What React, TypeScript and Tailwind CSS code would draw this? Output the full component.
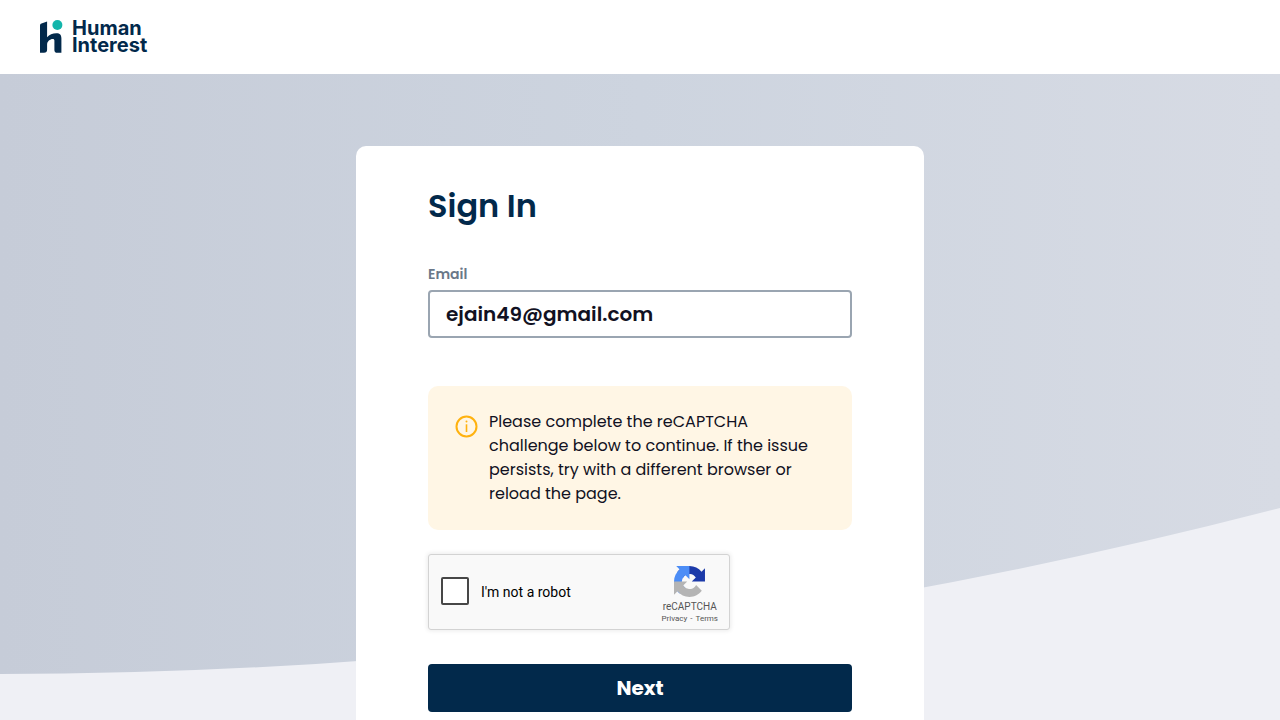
import React from "react";

function BrandLogo() {
  return (
    <a href="#" aria-label="Human Interest" className="flex items-center gap-[9px] text-[#02294b]">
      <svg width="23" height="34" viewBox="0 0 23 34" aria-hidden="true">
        <path
          fill="#02294b"
          d="M0 5.800C0 4.600.4 4 1.500 3.600L7.100 1.400V17.300C9.400 14.600 12.500 13.300 16.400 13.300C20 13.300 21.400 15 21.400 18.500V32.800H17.200C15.300 32.800 14.400 31.900 14.400 30V20.600C14.400 19.500 13.900 19 12.800 19C10 19 7.100 21.300 7.100 24.600V29.600C7.100 31.800 6.100 32.800 4 32.800H0Z"
        />
        <circle cx="17.400" cy="5" r="5" fill="#13b5ab" />
      </svg>
      <span className="block font-[Inter,sans-serif] text-[20px] font-bold leading-[17px]">
        <span className="block">Human</span>
        <span className="block">Interest</span>
      </span>
    </a>
  );
}

function Backdrop() {
  return (
    <svg
      className="absolute inset-0 h-full w-full"
      viewBox="0 0 1280 646"
      preserveAspectRatio="none"
      aria-hidden="true"
    >
      <defs>
        <linearGradient id="sky" x1="0" y1="0" x2="1" y2="0">
          <stop offset="0" stopColor="#c6ccd8" />
          <stop offset="0.5" stopColor="#cdd4df" />
          <stop offset="1" stopColor="#d7dbe4" />
        </linearGradient>
      </defs>
      <path fill="url(#sky)" d="M0 0H1280V434Q640 600 0 600Z" />
    </svg>
  );
}

function RecaptchaIcon() {
  return (
    <svg width="31" height="31" viewBox="0 0 64 64" aria-hidden="true">
      <path
        fill="#1c3aa9"
        d="M64 31.955l-.033-1.37V4.687l-7.16 7.16C50.948 4.674 42.033.093 32.05.093c-10.39 0-19.622 4.96-25.458 12.64l11.736 11.86a15.55 15.55 0 0 1 4.754-5.334c2.05-1.6 4.952-2.906 8.968-2.906.485 0 .86.057 1.135.163 4.976.393 9.288 3.14 11.828 7.124l-8.307 8.307L64 31.953"
      />
      <path
        fill="#4c8df6"
        d="M31.862.094l-1.37.033H4.594l7.16 7.16C4.58 13.147 0 22.06 0 32.046c0 10.39 4.96 19.622 12.64 25.458L24.5 45.768a15.55 15.55 0 0 1-5.334-4.754c-1.6-2.05-2.906-4.952-2.906-8.968 0-.485.057-.86.163-1.135.393-4.976 3.14-9.288 7.124-11.828l8.307 8.307L31.86.095"
      />
      <path
        fill="#b4b4b4"
        d="M.001 32.045l.033 1.37v25.898l7.16-7.16c5.86 7.173 14.774 11.754 24.76 11.754 10.39 0 19.622-4.96 25.458-12.64l-11.736-11.86a15.55 15.55 0 0 1-4.754 5.334c-2.05 1.6-4.952 2.906-8.968 2.906-.485 0-.86-.057-1.135-.163-4.976-.393-9.288-3.14-11.828-7.124l8.307-8.307c-10.522.04-22.4.066-27.295-.005"
      />
    </svg>
  );
}

function Recaptcha() {
  return (
    <div className="mt-6 flex h-[76px] w-[302px] items-start rounded-[3px] border border-[#d3d3d3] bg-[#f9f9f9] pl-3 pr-[11px] font-[Roboto,sans-serif] shadow-[0_0_4px_1px_rgba(0,0,0,0.08)]">
      <input
        id="robot"
        type="checkbox"
        className="mt-[22px] h-7 w-7 shrink-0 appearance-none rounded-[2px] border-2 border-[#474747] bg-white checked:bg-[#4285f4]"
      />
      <label htmlFor="robot" className="mt-[29px] flex-1 pl-3 text-[14px] leading-[17px] text-black">
        I'm not a robot
      </label>
      <div className="flex flex-col items-center pt-[11px] text-[#555555]">
        <RecaptchaIcon />
        <span className="mt-1 text-[10px] leading-[12px]">reCAPTCHA</span>
        <span className="flex gap-[3px] text-[8px] leading-[12px]">
          <a href="#">Privacy</a>
          <span>-</span>
          <a href="#">Terms</a>
        </span>
      </div>
    </div>
  );
}

function Notice() {
  return (
    <div role="status" className="mt-12 flex gap-[11px] rounded-[10px] bg-[#fff6e5] py-6 pl-[27px] pr-6">
      <svg className="mt-[5px] shrink-0" width="23" height="23" viewBox="0 0 23 23" fill="none" aria-hidden="true">
        <circle cx="11.500" cy="11.500" r="10" stroke="#ffb20f" strokeWidth="2" />
        <path d="M11.500 9.300V17" stroke="#ffb20f" strokeWidth="1.600" />
        <circle cx="11.500" cy="6.600" r="1" fill="#ffb20f" />
      </svg>
      <p className="text-[16px] leading-6 text-[#111122]">
        Please complete the reCAPTCHA
        <br />
        challenge below to continue. If the issue
        <br />
        persists, try with a different browser or
        <br />
        reload the page.
      </p>
    </div>
  );
}

export default function App() {
  return (
    <div className="flex min-h-screen flex-col bg-[#eff0f5] font-[Poppins,Inter,sans-serif]">
      <header className="flex h-[74px] items-center bg-white px-10">
        <BrandLogo />
      </header>
      <main className="relative flex flex-1 justify-center pt-[72px]">
        <Backdrop />
        <form
          className="relative w-full max-w-[568px] rounded-t-[10px] bg-white px-[72px] pb-2 pt-9"
          onSubmit={(e) => e.preventDefault()}
        >
          <h1 className="text-[32px] font-semibold leading-[48px] text-[#02294b]">Sign In</h1>
          <label htmlFor="email" className="mt-8 block text-[14px] font-semibold leading-6 text-[#6a7889]">
            Email
          </label>
          <input
            id="email"
            type="email"
            defaultValue="ejain49@gmail.com"
            className="mt-1 block h-12 w-full rounded-[4px] border-2 border-[#9aa5b1] bg-white px-4 text-[20px] font-semibold text-[#111122] outline-none"
          />
          <Notice />
          <Recaptcha />
          <button type="submit" className="mt-[34px] block h-12 w-full rounded-[4px] bg-[#02294b] text-[20px] font-bold text-white">
            Next
          </button>
        </form>
      </main>
    </div>
  );
}
